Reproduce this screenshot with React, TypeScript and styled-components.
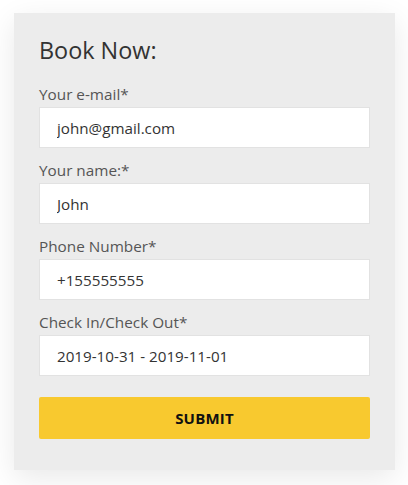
import React from "react";
import styled, { createGlobalStyle } from "styled-components";

const Global = createGlobalStyle`
  html, body { margin: 0; padding: 0; background: #ffffff; }
  body { font-family: "Open Sans", "Noto Sans", sans-serif; }
  * { box-sizing: border-box; }
`;

const Page = styled.div`
  padding: 13px 13px 15px 14px;
  width: 408px;
`;

const Card = styled.form`
  width: 381px;
  background: #ececec;
  padding: 21px 25px 31px;
  box-shadow: 0 8px 28px rgba(0, 0, 0, 0.09);
  display: flex;
  flex-direction: column;
`;

const Title = styled.h2`
  margin: 0 0 18px;
  font-size: 23.4px;
  font-weight: 400;
  line-height: 32px;
  color: #333333;
`;

const Field = styled.div`
  display: flex;
  flex-direction: column;
  margin-bottom: 12px;
`;

const Label = styled.label`
  font-size: 15.3px;
  line-height: 20px;
  color: #555555;
  margin-bottom: 3px;
`;

const Input = styled.input`
  height: 41px;
  width: 100%;
  border: 1px solid #e2e2e2;
  background: #ffffff;
  padding: 0 17px;
  font-family: inherit;
  font-size: 15.2px;
  color: #333333;
  outline: none;
`;

const Submit = styled.button`
  margin-top: 9px;
  height: 42px;
  border: none;
  border-radius: 2px;
  background: #f8c92f;
  color: #111111;
  font-family: inherit;
  font-size: 15px;
  font-weight: 700;
  letter-spacing: 0.2px;
  cursor: pointer;
`;

const fields = [
  { label: "Your e-mail*", value: "john@gmail.com" },
  { label: "Your name:*", value: "John" },
  { label: "Phone Number*", value: "+155555555" },
  { label: "Check In/Check Out*", value: "2019-10-31 - 2019-11-01" },
];

export default function App() {
  return (
    <>
      <Global />
      <Page>
        <Card onSubmit={(e) => e.preventDefault()}>
          <Title>Book Now:</Title>
          {fields.map((f) => (
            <Field key={f.label}>
              <Label>{f.label}</Label>
              <Input defaultValue={f.value} />
            </Field>
          ))}
          <Submit type="submit">SUBMIT</Submit>
        </Card>
      </Page>
    </>
  );
}
